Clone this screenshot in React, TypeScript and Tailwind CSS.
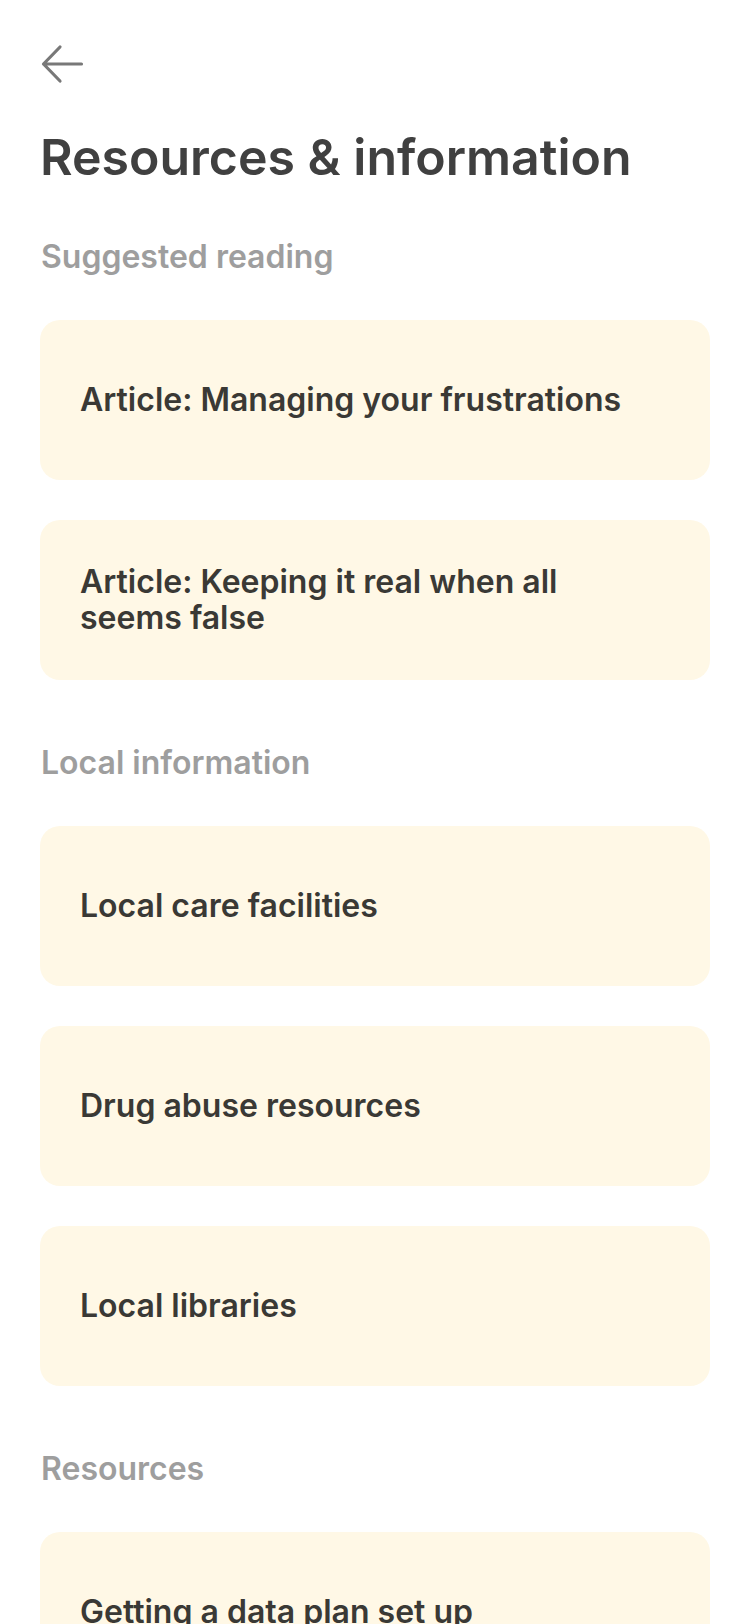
import React from 'react';

interface Section {
  title: string;
  items: string[];
}

const sections: Section[] = [
  {
    title: 'Suggested reading',
    items: ['Article: Managing your frustrations', 'Article: Keeping it real when all seems false'],
  },
  {
    title: 'Local information',
    items: ['Local care facilities', 'Drug abuse resources', 'Local libraries'],
  },
  {
    title: 'Resources',
    items: ['Getting a data plan set up'],
  },
];

const BackArrow = () => (
  <svg width="48" height="48" viewBox="0 0 48 48" fill="none" className="-ml-0.5 block">
    <path
      d="M43.5 24H5.5M22 7L5.5 24L22 41"
      stroke="#787878"
      strokeWidth="3.2"
      strokeLinecap="round"
      strokeLinejoin="round"
    />
  </svg>
);

export default function App() {
  return (
    <div
      className="min-h-[1624px] w-[750px] bg-white px-10 pt-10 pb-20"
      style={{ fontFamily: 'Inter, "Noto Sans", sans-serif' }}
    >
      <button type="button" className="block">
        <BackArrow />
      </button>

      <h1 className="mt-10 text-[50px] leading-[58px] font-semibold text-[#404040]">
        Resources &amp; information
      </h1>

      {sections.map((section, si) => (
        <div key={section.title} className={si === 0 ? 'mt-[53px]' : 'mt-[65px]'}>
          <h2 className="pl-px text-[32px] leading-9 font-semibold text-[#9e9e9e]">{section.title}</h2>
          <div className="mt-[45px] flex flex-col gap-10">
            {section.items.map((item) => (
              <div
                key={item}
                className="flex h-[160px] items-center rounded-[20px] bg-[#fff8e6] pl-10 pr-[60px]"
              >
                <span className="text-[32px] leading-9 font-semibold text-[#3a3935]">{item}</span>
              </div>
            ))}
          </div>
        </div>
      ))}
    </div>
  );
}
